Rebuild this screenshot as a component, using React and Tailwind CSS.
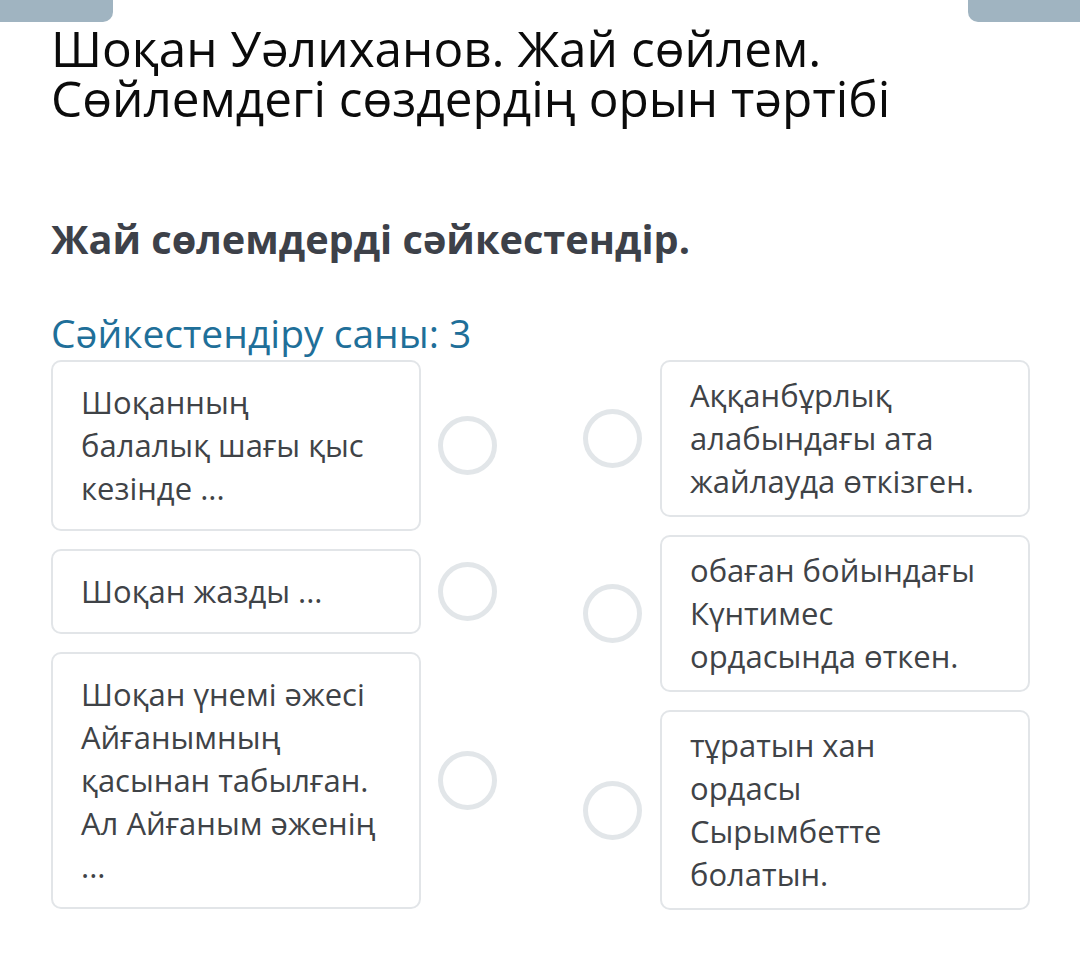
export default function App() {
  const font = { fontFamily: '"Open Sans", "Noto Sans", sans-serif' };
  const Circle = () => (
    <div className="w-[59px] h-[59px] rounded-full border-[5px] border-[#e2e6e9] shrink-0" />
  );
  const left = [
    ["Шоқанның", "балалық шағы қыс", "кезінде ..."],
    ["Шоқан жазды ..."],
    ["Шоқан үнемі әжесі", "Айғанымның", "қасынан табылған.", "Ал Айғаным әженің", "..."],
  ];
  const right = [
    ["Аққанбұрлық", "алабындағы ата", "жайлауда өткізген."],
    ["обаған бойындағы", "Күнтимес", "ордасында өткен."],
    ["тұратын хан", "ордасы", "Сырымбетте", "болатын."],
  ];
  return (
    <div className="w-[1080px] h-[964px] bg-white relative overflow-hidden" style={font}>
      <div className="absolute left-0 top-0 w-[113px] h-[22px] bg-[#a0b4c1] rounded-br-[10px]" />
      <div className="absolute right-0 top-0 w-[112px] h-[22px] bg-[#a0b4c1] rounded-bl-[10px]" />
      <div className="pl-[51px] pr-[50px] pt-[23px]">
        <h1 className="text-[49.5px] leading-[50px] text-[#0b0b0b] font-normal whitespace-nowrap">
          Шоқан Уәлиханов. Жай сөйлем.
          <br />
          Сөйлемдегі сөздердің орын тәртібі
        </h1>
        <h2 className="mt-[93px] text-[39.7px] leading-[46px] font-bold text-[#3d4149] whitespace-nowrap">
          Жай сөлемдерді сәйкестендір.
        </h2>
        <div className="mt-[48px] text-[39px] leading-[46px] text-[#1f6f99] whitespace-nowrap">
          Сәйкестендіру саны: 3
        </div>
        <div className="mt-[4px] flex justify-between">
          <div className="flex flex-col gap-[18px]">
            {left.map((lines, i) => (
              <div key={i} className="flex items-center gap-[17px]">
                <div className="w-[370px] border-2 border-[#e2e5e8] rounded-[10px] px-[28px] py-[19px] text-[31px] leading-[43px] text-[#3f4347]">
                  {lines.map((l, j) => (
                    <div key={j} className="whitespace-nowrap">{l}</div>
                  ))}
                </div>
                <Circle />
              </div>
            ))}
          </div>
          <div className="flex flex-col gap-[18px]">
            {right.map((lines, i) => (
              <div key={i} className="flex items-center gap-[18px]">
                <Circle />
                <div className="w-[370px] border-2 border-[#e2e5e8] rounded-[10px] px-[28px] py-[12px] text-[31px] leading-[43px] text-[#3f4347]">
                  {lines.map((l, j) => (
                    <div key={j} className="whitespace-nowrap">{l}</div>
                  ))}
                </div>
              </div>
            ))}
          </div>
        </div>
      </div>
    </div>
  );
}
